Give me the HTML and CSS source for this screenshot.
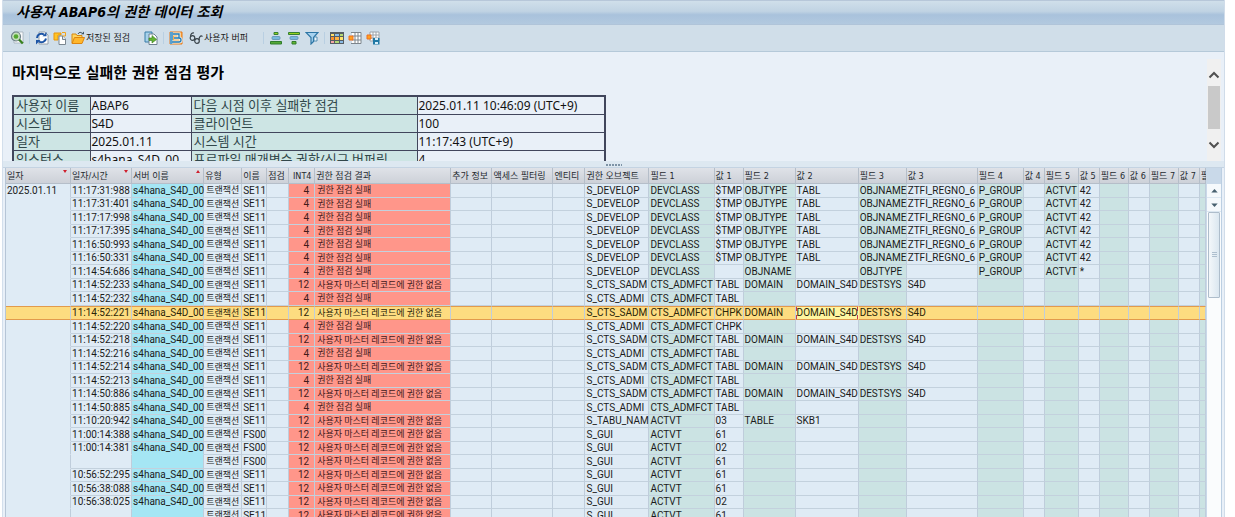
FILE: index.html
```html
<!DOCTYPE html>
<html lang="ko">
<head>
<meta charset="utf-8">
<title>사용자 ABAP6의 권한 데이터 조회</title>
<link rel="stylesheet" href="styles.css">
</head>
<body>
<main class="window">
  <h1 class="titlebar">사용자 ABAP6의 권한 데이터 조회</h1>

  <div class="toolbar" role="toolbar" aria-label="도구 모음">
    <button class="tool" type="button" aria-label="상세"><svg viewBox="0 0 14 14"><path d="M4 1h9v11H4z" fill="#f7f9fb" stroke="#9aa7b1" stroke-width=".7"/><circle cx="6" cy="5.500" r="4.500" fill="#c4dfba" stroke="#6d7f88" stroke-width="1.200"/><circle cx="6" cy="5.500" r="2.300" fill="#54a72f"/><path d="M9 8.500l3.800 4" stroke="#38811f" stroke-width="2.400"/></svg></button>
    <span class="sep"></span>
    <button class="tool wide" type="button" aria-label="새로 고침"><svg viewBox="0 0 14 14"><path d="M4 1h6l3 3v9H4z" fill="#fff" stroke="#85919b" stroke-width=".8"/><path d="M2 7a4.500 4.500 0 0 1 7-3.500" fill="none" stroke="#1d55a5" stroke-width="2"/><path d="M7.500 5.200h4V1z" fill="#1d55a5"/><path d="M11 7.500a4.500 4.500 0 0 1-7 3" fill="none" stroke="#1d55a5" stroke-width="2"/><path d="M5.500 9H1v4.500z" fill="#1d55a5"/></svg></button>
    <button class="tool wide" type="button" aria-label="복사"><svg viewBox="0 0 14 14"><path d="M1 2h7v2H5v5H1z" fill="#ffc426" stroke="#e9950b"/><path d="M6 5h3.500L12.500 8v5.500H6z" fill="#fff" stroke="#7a8690"/><path d="M9 1.500h3.500V5H9" fill="none" stroke="#f2a51b"/><path d="M9.500 5v3.500H13" fill="#e0e7ec" stroke="#7a8690"/></svg></button>
    <button class="tool text" type="button"><svg viewBox="0 0 14 14"><path d="M1 12V3h4l1 1.500h5V6" fill="#ffd45f" stroke="#d8880e"/><path d="M7 3c1-2 3-2.200 4.500-.5" fill="none" stroke="#3e5360"/><path d="M10 3.200h3V.5z" fill="#3e5360"/><path d="M1 12.500L3.500 6.500h10L11 12.500z" fill="#ffb72c" stroke="#dd8510"/></svg>저장된 점검</button>
    <button class="tool export" type="button" aria-label="내보내기"><svg viewBox="0 0 14 14"><path d="M1 1h7v10H1z" fill="#a7d2eb" stroke="#397ca6"/><path d="M5 3h5l3 3v7.500H5z" fill="#fff" stroke="#6e8190"/><path d="M5 7h3V4.500l4.500 4L8 12V9.500H5z" fill="#64b333" stroke="#347c1c" stroke-width=".6"/></svg></button>
    <span class="sep"></span>
    <button class="tool trace" type="button" aria-label="추적"><svg viewBox="0 0 14 14"><path d="M1 1h12v12H1z" fill="#ffad43" stroke="#e5781d"/><path d="M1 1h3v12H1z" fill="#5aa0ce"/><path d="M4 3h6v4H6M5 7h5a2 2 0 0 1 0 4H3" fill="none" stroke="#e9f4fc" stroke-width="3"/><path d="M4 3h6v4H6M5 7h5a2 2 0 0 1 0 4H3" fill="none" stroke="#257bb2" stroke-width="1.300"/></svg></button>
    <button class="tool text" type="button"><svg viewBox="0 0 14 14"><g fill="none" stroke="#39434a" stroke-width="1.200"><circle cx="3.500" cy="7" r="2.300"/><circle cx="8" cy="10" r="2.300"/><path d="M1.500 6C1.500 3 3 1.500 5 2M10 9c0-3 1.500-5 3.500-3.500M5.500 8l1 .5"/></g></svg>사용자 버퍼</button>
    <span class="sep sort-sep"></span>
    <button class="tool wide" type="button" aria-label="오름차순 정렬"><svg viewBox="0 0 14 14"><path d="M5 1.500h4v2H5z" fill="#94d01e" stroke="#348033"/><rect x="3" y="5.500" width="8" height="3" rx="1" fill="#79b8df" stroke="#5b8fb1" stroke-width=".8"/><path d="M1.500 10.500h11v2.500h-11z" fill="#55a836" stroke="#307d2d"/></svg></button>
    <button class="tool wide" type="button" aria-label="내림차순 정렬"><svg viewBox="0 0 14 14"><path d="M1.500 1.500h11v2h-11z" fill="#94d01e" stroke="#348033"/><rect x="3" y="5.500" width="8" height="3" rx="1" fill="#79b8df" stroke="#5b8fb1" stroke-width=".8"/><path d="M5 10.500h4V13H5z" fill="#65b62e" stroke="#307d2d"/></svg></button>
    <button class="tool" type="button" aria-label="필터"><svg viewBox="0 0 14 14"><path d="M1 1.500h12L8.500 6.500v4L6 13V6.500z" fill="#a8d2ef" stroke="#2d76a5" stroke-width="1.200"/><path d="M9 6h3v4H9z" fill="#eef7fd" stroke="#397ca6" stroke-width=".8"/></svg></button>
    <span class="sep"></span>
    <button class="tool wide" type="button" aria-label="레이아웃"><svg viewBox="0 0 14 14"><path d="M0 1h14v12H0z" fill="#555d63"/><path d="M1 3h3v2H1z" fill="#ffe16b"/><path d="M5 3h4v2H5z" fill="#8abce7"/><path d="M10 3h3v2h-3z" fill="#b2d875"/><path d="M1 6h3v3H1z" fill="#fa8f2c"/><path d="M5 6h4v3H5z" fill="#ffb347"/><path d="M10 6h3v3h-3z" fill="#ffe16b"/><path d="M1 10h3v2H1z" fill="#f6a5a5"/><path d="M5 10h4v2H5z" fill="#b2d875"/><path d="M10 10h3v2h-3z" fill="#8abce7"/></svg></button>
    <button class="tool wide" type="button" aria-label="레이아웃 선택"><svg viewBox="0 0 14 14"><path d="M4 1h9v12H4z" fill="#fff"/><path d="M3 1.500h10v11H3M4 5h9M4 9h9M7 1v12M10 1v12" fill="none" stroke="#7c858c"/><path d="M1 5h4v4H1z" fill="#ffa11e" stroke="#ef6f20"/></svg></button>
    <button class="tool" type="button" aria-label="레이아웃 저장"><svg viewBox="0 0 14 14"><path d="M4 1h9v9H4z" fill="#fff" stroke="#9ca3aa"/><path d="M4 4h9M4 7h9M7 1v9M10 1v9" stroke="#9ca3aa"/><path d="M1 4h4v4H1z" fill="#ffa11e" stroke="#ef6f20"/><path d="M7 7h6.500v6.500H7z" fill="#1f78a5"/><path d="M9 7h3v2H9zM9 11h3v2H9z" fill="#d6eefa"/></svg></button>
  </div>

  <section class="summary">
    <div class="report">
      <h2>마지막으로 실패한 권한 점검 평가</h2>
      <table class="info">
        <colgroup><col class="i1"><col class="i2"><col class="i3"><col class="i4"></colgroup>
        <tbody>
          <tr><th scope="row">사용자 이름</th><td>ABAP6</td><th scope="row">다음 시점 이후 실패한 점검</th><td>2025.01.11 10:46:09 (UTC+9)</td></tr>
          <tr><th scope="row">시스템</th><td>S4D</td><th scope="row">클라이언트</th><td>100</td></tr>
          <tr><th scope="row">일자</th><td>2025.01.11</td><th scope="row">시스템 시간</th><td>11:17:43 (UTC+9)</td></tr>
          <tr><th scope="row">인스턴스</th><td>s4hana_S4D_00</td><th scope="row">프로파일 매개변수 권한/신규 버퍼링</th><td>4</td></tr>
        </tbody>
      </table>
    </div>
    <div class="report-scroll">
      <button type="button" aria-label="위로"><svg viewBox="0 0 12 8"><path d="M1.500 6.500L6 2l4.500 4.500" fill="none" stroke="#505050" stroke-width="2"/></svg></button>
      <span class="report-thumb"></span>
      <button type="button" aria-label="아래로"><svg viewBox="0 0 12 8"><path d="M1.500 1.500L6 6l4.500-4.500" fill="none" stroke="#505050" stroke-width="2"/></svg></button>
    </div>
  </section>

  <div class="splitter"><span class="grip"></span></div>

  <section class="grid">
    <div class="grid-body">
      <table class="log">
        <colgroup id="cols"></colgroup>
        <thead><tr id="head"></tr></thead>
        <tbody id="rows"></tbody>
      </table>
    </div>
    <div class="grid-scroll">
      <button type="button" aria-label="위로 스크롤"><svg viewBox="0 0 8 5"><path d="M4 0l4 4.500H0z" fill="#47606f"/></svg></button>
      <button type="button" aria-label="아래로 스크롤"><svg viewBox="0 0 8 5"><path d="M0 .5h8L4 5z" fill="#47606f"/></svg></button>
      <div class="track"><span class="thumb"><i></i></span></div>
    </div>
  </section>
</main>
<script src="app.js"></script>
</body>
</html>
```
FILE: styles.css
```css
* { box-sizing: border-box; }

body {
  margin: 0;
  background: #fff;
  color: #1b1b1b;
  font-family: "DejaVu Sans Condensed", "Noto Sans CJK KR", sans-serif;
  font-size: 9px;
}

button {
  margin: 0;
  padding: 0;
  border: 0;
  background: none;
  color: inherit;
  font: inherit;
}

.window {
  display: flex;
  flex-direction: column;
  height: 100vh;
  margin: 0 10px 0 2px;
  border-left: 1px solid #d3dfec;
  border-right: 1px solid #d0dce9;
  background: #e9f0f8;
  overflow: hidden;
}

.titlebar {
  flex: none;
  height: 25px;
  margin: 0;
  padding-left: 13px;
  border-top: 1px solid #b7c7d9;
  border-bottom: 1px solid #b0c4d9;
  background: linear-gradient(#d0dfea, #c0d3e3 45%, #a9c2dc 60%, #b2c9df);
  color: #000;
  font-size: 14px;
  font-style: italic;
  font-weight: 700;
  line-height: 23px;
}

.toolbar {
  display: flex;
  flex: none;
  align-items: center;
  height: 27px;
  padding: 0 0 1px 7px;
  border-bottom: 1px solid #b5c9d9;
  background: #d0dee9;
}

.tool {
  display: flex;
  align-items: center;
  gap: 1px;
  line-height: 14px;
}

.tool svg {
  display: block;
  width: 14px;
  height: 14px;
}

.wide { margin-right: 4px; }
.export { margin-left: 14px; }
.text { white-space: nowrap; }
.trace { margin-right: 6px; }

.sep {
  width: 1px;
  height: 12px;
  margin: 0 5px;
  background: #b9cfe2;
}

.sort-sep { margin-left: 15px; }

.summary {
  display: flex;
  flex: none;
  height: 109px;
  padding-right: 3px;
  overflow: hidden;
}

.report {
  flex: 1;
  padding: 11px 0 0 9px;
}

h2 {
  margin: 0 0 12px;
  color: #000;
  font-size: 15px;
  font-weight: 700;
  line-height: 20px;
}

.info {
  width: 594px;
  border: 2px solid #41465c;
  border-collapse: collapse;
  table-layout: fixed;
  color: #111;
  font-family: "Noto Sans", "Noto Sans CJK KR", sans-serif;
}

.i1 { width: 77px; }
.i2 { width: 101px; }
.i3 { width: 226px; }
.i4 { width: 188px; }

.info th,
.info td {
  height: 18px;
  padding: 0 2px;
  border: 1px solid #41465c;
  font-size: 12px;
  line-height: 17px;
  text-align: left;
  white-space: nowrap;
}

.info td { padding-left: 1px; }

.info th {
  background: #cde5e4;
  color: #31474a;
  font-size: 13px;
  font-weight: 400;
}

.report-scroll {
  display: flex;
  flex-direction: column;
  align-items: center;
  width: 14px;
  margin: 7px 0 0;
  padding-top: 9px;
  background: #f0f0f0;
}

.report-scroll button {
  height: 14px;
}

.report-scroll svg {
  display: block;
  width: 12px;
  height: 8px;
}

.report-thumb {
  width: 12px;
  height: 43px;
  margin: 4px 0 9px;
  background: #c9c9c9;
}

.splitter {
  flex: none;
  height: 7px;
  padding-top: 3px;
  border-bottom: 1px solid #c4d3e2;
  background: #dde8f1;
}

.grip {
  display: block;
  width: 16px;
  height: 2px;
  margin: 0 auto;
  background: repeating-linear-gradient(90deg, #7e93a6 0 2px, #dde8f1 2px 3px);
}

.grid {
  display: flex;
  flex: 1;
  min-height: 0;
  margin: 0 2px;
  border-left: 1px solid #b6c5d6;
  border-right: 1px solid #bccfe2;
  background: #c9d9e9;
  overflow: hidden;
}

.grid-body {
  flex: 1;
  overflow: hidden;
}

.log {
  width: 100%;
  border-collapse: separate;
  border-spacing: 0;
  table-layout: fixed;
  font-family: Roboto, "Noto Sans CJK KR", sans-serif;
}

.log th,
.log td {
  padding: 0 0 0 1px;
  border-right: 1px solid #bfcddb;
  border-bottom: 1px solid #c3d1dd;
  text-align: left;
  white-space: nowrap;
}

.log th {
  position: relative;
  height: 16px;
  background: linear-gradient(#dfe2e8, #cdd1d8);
  border-color: #b5bec9;
  color: #252a30;
  font-family: "DejaVu Sans Condensed", "Noto Sans CJK KR", sans-serif;
  font-weight: 400;
  line-height: 14px;
}

.log td {
  height: 13px;
  background: #dfebf5;
  font-size: 10px;
  line-height: 12px;
}

.log tr:nth-child(odd) td,
.log .current td {
  height: 14px;
  line-height: 13px;
}

.log td.ko { padding-left: 2px; font-size: 9px; }
.log .num { padding-right: 5px; text-align: right; }
.log th.num { padding-right: 0; text-align: center; }
.log td.field { background: #cbe3e3; }
.log td.server { background: #a5e6f4; }
.log td.fail { background: #ff968a; color: #421a1a; }
.log td.merged { border-bottom-color: transparent; }

.log .current td {
  border-top: 1px solid #e29a4c;
  border-bottom: 1px solid #e29a4c;
  background: #fddc80;
  color: #2b2508;
  line-height: 12px;
}

.log .current td.focus {
  border-right-color: #fff5a0;
  background:
    linear-gradient(#c63d54 0 4px, transparent 4px 8px, #c63d54 8px) left / 1px 100% no-repeat,
    linear-gradient(#c63d54 0 4px, transparent 4px 8px, #c63d54 8px) right / 1px 100% no-repeat,
    #fff5a0;
}

.mark::after {
  position: absolute;
  top: 2px;
  right: 3px;
  border: 2px solid transparent;
  border-top: 3px solid #cf1f2d;
  border-bottom: 0;
  content: "";
}

.mark.up::after {
  border-top: 0;
  border-bottom: 3px solid #cf1f2d;
}

.grid-scroll {
  display: flex;
  flex-direction: column;
  gap: 1px;
  width: 14px;
  margin: 16px 0 0 1px;
  background: #dce7f1;
}

.grid-scroll button {
  display: flex;
  align-items: center;
  justify-content: center;
  height: 13px;
  background: #f5f9fc;
}

.grid-scroll svg {
  width: 7px;
  height: 4px;
}

.track {
  flex: 1;
  background: #fafcfd;
}

.thumb {
  display: flex;
  align-items: center;
  justify-content: center;
  height: 86px;
  margin: 0 1px;
  border: 1px solid #aebdcb;
  border-radius: 1px;
  background: linear-gradient(90deg, #f3f7fa, #dbe7f0);
}

.thumb i {
  width: 5px;
  height: 6px;
  background: repeating-linear-gradient(#aebfce 0 1px, transparent 1px 2px);
}
```
FILE: app.js
```js
const columns = [
  ["일자", 65, "date mark"], ["일자/시간", 61, "mark"], ["서버 이름", 72, "server mark up"],
  ["유형", 38, "ko"], ["이름", 25, ""], ["점검", 22, ""], ["INT4", 26, "num fail"],
  ["권한 점검 결과", 136, "ko fail"], ["추가 정보", 41, ""], ["액세스 필터링", 61, ""],
  ["엔티티", 32, ""], ["권한 오브젝트", 64, ""], ["필드 1", 65, "field"], ["값 1", 29, ""],
  ["필드 2", 52, "field"], ["값 2", 63, ""], ["필드 3", 48, "field"], ["값 3", 71, ""],
  ["필드 4", 46, "field"], ["값 4", 21, ""], ["필드 5", 34, "field"], ["값 5", 21, ""],
  ["필드 6", 29, "field"], ["값 6", 21, ""], ["필드 7", 29, "field"], ["값 7", 21, ""],
  ["필드 8", 6, "field"]
];

const develop = "S_DEVELOP|DEVCLASS|$TMP|OBJTYPE|TABL|OBJNAME|ZTFI_REGNO_6|P_GROUP||ACTVT|42";
const sadm = "S_CTS_SADM|CTS_ADMFCT|TABL|DOMAIN|DOMAIN_S4D|DESTSYS|S4D";
const admi = "S_CTS_ADMI|CTS_ADMFCT|TABL";

// time, transaction, result code, authorization values
const log = [
  ["11:17:31:988", "SE11", 4, develop],
  ["11:17:31:401", "SE11", 4, develop],
  ["11:17:17:998", "SE11", 4, develop],
  ["11:17:17:395", "SE11", 4, develop],
  ["11:16:50:993", "SE11", 4, develop],
  ["11:16:50:331", "SE11", 4, develop],
  ["11:14:54:686", "SE11", 4, "S_DEVELOP|DEVCLASS||OBJNAME||OBJTYPE||P_GROUP||ACTVT|*"],
  ["11:14:52:233", "SE11", 12, sadm],
  ["11:14:52:232", "SE11", 4, admi],
  ["11:14:52:221", "SE11", 12, sadm.replace("TABL", "CHPK")],
  ["11:14:52:220", "SE11", 4, admi.replace("TABL", "CHPK")],
  ["11:14:52:218", "SE11", 12, sadm],
  ["11:14:52:216", "SE11", 4, admi],
  ["11:14:52:214", "SE11", 12, sadm],
  ["11:14:52:213", "SE11", 4, admi],
  ["11:14:50:886", "SE11", 12, sadm],
  ["11:14:50:885", "SE11", 4, admi],
  ["11:10:20:942", "SE11", 12, "S_TABU_NAM|ACTVT|03|TABLE|SKB1"],
  ["11:00:14:388", "FS00", 12, "S_GUI|ACTVT|61"],
  ["11:00:14:381", "FS00", 12, "S_GUI|ACTVT|02"],
  ["", "FS00", 12, "S_GUI|ACTVT|61"],
  ["10:56:52:295", "SE11", 12, "S_GUI|ACTVT|61"],
  ["10:56:38:088", "SE11", 12, "S_GUI|ACTVT|61"],
  ["10:56:38:025", "SE11", 12, "S_GUI|ACTVT|02"],
  ["", "SE11", 12, "S_GUI|ACTVT|61"]
];

const currentRow = 9;
const focusColumn = 15;
const total = columns.reduce((sum, c) => sum + c[1], 0);

for (const [label, width, kind] of columns) {
  const col = document.createElement("col");
  col.style.width = (width / total * 100) + "%";
  document.getElementById("cols").append(col);

  const th = document.createElement("th");
  th.scope = "col";
  th.className = kind;
  th.textContent = label;
  document.getElementById("head").append(th);
}

log.forEach(([time, code, result, values], r) => {
  const tr = document.createElement("tr");
  if (r === currentRow) tr.className = "current";
  const next = log[r + 1];
  const cells = [
    r === 0 ? "2025.01.11" : "", time, time ? "s4hana_S4D_00" : "", "트랜잭션", code, "",
    result, result === 4 ? "권한 점검 실패" : "사용자 마스터 레코드에 권한 없음",
    "", "", "", ...values.split("|")
  ];
  columns.forEach(([, , kind], c) => {
    const td = document.createElement("td");
    td.className = kind.replace("mark up", "").replace("mark", "").trim();
    if (c === 0 || (c < 3 && next && !next[0])) td.classList.add("merged");
    if (r === currentRow && c === focusColumn) td.classList.add("focus");
    td.textContent = cells[c] ?? "";
    tr.append(td);
  });
  document.getElementById("rows").append(tr);
});
```
